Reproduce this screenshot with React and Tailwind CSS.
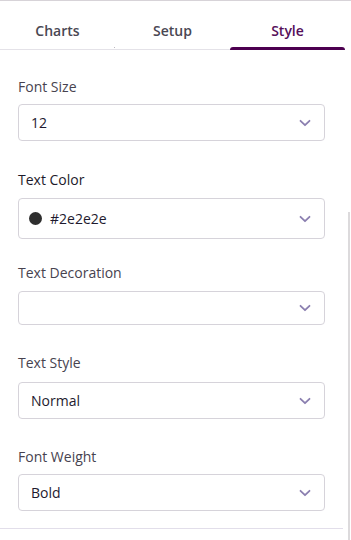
import React from "react";

function Chevron() {
  return (
    <svg width="12" height="8" viewBox="0 0 12 8" fill="none" className="shrink-0 mr-[1px]">
      <path d="M1.5 1.8 L6 6.2 L10.5 1.8" stroke="#8b7fb0" strokeWidth="1.8" strokeLinecap="round" strokeLinejoin="round" />
    </svg>
  );
}

function Select({ children, h }) {
  return (
    <div className={`flex items-center justify-between border border-[#d6d3da] rounded-[4px] pl-[12px] pr-[12px] w-[307px] ${h}`}>
      <div className="flex items-center text-[14px] text-[#1e1a2e]">{children}</div>
      <Chevron />
    </div>
  );
}

export default function App() {
  return (
    <div className="relative w-[351px] h-[540px] bg-white overflow-hidden" style={{ fontFamily: '"Open Sans", sans-serif' }}>
      <div className="h-px bg-[#d7d3d8] w-full" />
      <div className="w-[345px] flex h-[49px] border-b border-[#e4e2e8]">
        <div className="relative flex-1 flex items-center justify-center pt-[10px] text-[14px] font-semibold text-[#4a4853]">
          Charts
          <div className="absolute right-0 bottom-[1px] w-px h-px bg-[#bdbac2]" />
        </div>
        <div className="flex-1 flex items-center justify-center pt-[10px] text-[14px] font-semibold text-[#4a4853]">Setup</div>
        <div className="relative flex-1 flex items-center justify-center pt-[10px] text-[14px] font-semibold text-[#56105a]">
          Style
          <div className="absolute left-0 right-0 bottom-[-1px] h-[3px] bg-[#4d0050] rounded-t-[3px]" />
        </div>
      </div>
      <div className="w-[345px] pl-[18px] pt-[27px]">
        <div className="text-[14px] leading-[20px] text-[#47434f]">Font Size</div>
        <div className="mt-[7px]">
          <Select h="h-[37px]">12</Select>
        </div>

        <div className="mt-[29px] text-[14px] leading-[20px] text-[#1d1a2b]">Text Color</div>
        <div className="mt-[8px]">
          <Select h="h-[41px]">
            <span className="inline-block w-[13px] h-[13px] rounded-full bg-[#2e2e2e] mr-[8px] -ml-[2px]" />
            #2e2e2e
          </Select>
        </div>

        <div className="mt-[24px] text-[14px] leading-[20px] text-[#47434f]">Text Decoration</div>
        <div className="mt-[8px]">
          <Select h="h-[34px]"></Select>
        </div>

        <div className="mt-[28px] text-[14px] leading-[20px] text-[#47434f]">Text Style</div>
        <div className="mt-[9px]">
          <Select h="h-[37px]">Normal</Select>
        </div>

        <div className="mt-[28px] text-[14px] leading-[20px] text-[#47434f]">Font Weight</div>
        <div className="mt-[7px]">
          <Select h="h-[37px]">Bold</Select>
        </div>
      </div>
      <div className="mt-[17px] w-[343px] h-px bg-[#e2deea]" />
      <div className="absolute left-[348px] top-[212px] w-[2px] bottom-0 bg-[#dcdadc]" />
    </div>
  );
}
